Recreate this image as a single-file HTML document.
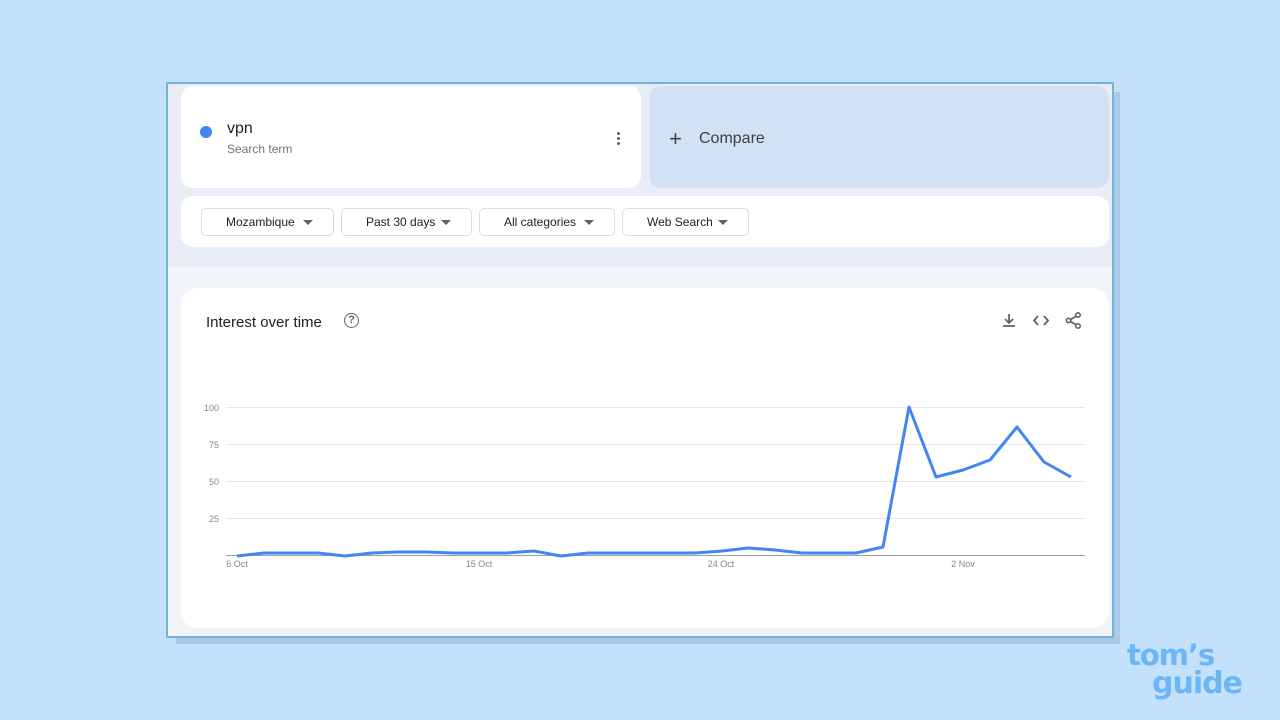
<!DOCTYPE html><html><head><style>
body{margin:0;width:1280px;height:720px;background:#c3e1fb;font-family:"Liberation Sans",Arial,sans-serif;position:relative;overflow:hidden}
.sh{position:absolute;left:176px;top:92px;width:944px;height:552px;background:#a9c9e8}
.fr{position:absolute;left:166px;top:82px;width:944px;height:552px;border:2px solid #72b4d8;background:#f1f4f9;overflow:hidden}
.top{position:absolute;left:0;top:0;width:944px;height:183px;background:#e9eef6}
.card{position:absolute;background:#fff;border-radius:12px}
.chip{position:absolute;top:124px;height:28px;border:1px solid #dadce0;border-radius:5px;font-size:12px;color:#202124;line-height:27px;box-sizing:border-box;padding-left:24px}
.chip:after{content:"";position:absolute;right:20px;top:11px;border:5px solid transparent;border-top:5px solid #5f6368;border-bottom:none}
</style></head><body>
<div class="sh"></div>
<div class="fr">
<div class="top"></div>
<div class="card" style="left:13px;top:2px;width:460px;height:102px">
<div style="position:absolute;left:19px;top:40px;width:12px;height:12px;border-radius:50%;background:#4285f4"></div>
<div style="position:absolute;left:46px;top:34px;font-size:16px;color:#202124">vpn</div>
<div style="position:absolute;left:46px;top:56px;font-size:12px;color:#70757a">Search term</div>
<div style="position:absolute;left:436px;top:46px;width:3px;height:3px;background:#5f6368;border-radius:50%;box-shadow:0 5px 0 #5f6368,0 10px 0 #5f6368"></div>
</div>
<div class="card" style="left:481px;top:2px;width:460px;height:102px;background:#d3e1f4">
<div style="position:absolute;left:20px;top:40px;font-size:22px;color:#444;font-weight:300">+</div>
<div style="position:absolute;left:50px;top:44px;font-size:16px;color:#3c4043">Compare</div>
</div>
<div class="card" style="left:13px;top:112px;width:928px;height:51px"></div>
<div class="chip" style="left:33px;width:133px">Mozambique</div>
<div class="chip" style="left:173px;width:131px">Past 30 days</div>
<div class="chip" style="left:311px;width:136px">All categories</div>
<div class="chip" style="left:454px;width:127px">Web Search</div>
<div class="card" style="left:13px;top:204px;width:928px;height:340px;border-radius:16px">
<div style="position:absolute;left:25px;top:26px;font-size:15px;color:#202124">Interest over time</div>
<div style="position:absolute;left:163px;top:25px;width:13px;height:13px;border:1.5px solid #5f6368;border-radius:50%;font-size:11px;line-height:13px;text-align:center;color:#5f6368;font-weight:bold">?</div>
</div>
<svg style="position:absolute;left:-168px;top:-84px" width="1280" height="720">
<g stroke="#5f6368" stroke-width="1.8" fill="none">
<path d="M1009 314v9M1005 319l4 4 4-4M1003 326h12"/>
<path d="M1038 316l-4 4.5 4 4.5M1044 316l4 4.5-4 4.5"/>
<path d="M1078 315l-9 5.5 9 5.5"/>
</g>
<g fill="#fff" stroke="#5f6368" stroke-width="1.6"><circle cx="1078" cy="315" r="2.2"/><circle cx="1068.5" cy="320.5" r="2.2"/><circle cx="1078" cy="326" r="2.2"/></g>
<g stroke="#e4e6e8" stroke-width="1"><path d="M226 407.5H1085M226 444.5H1085M226 481.5H1085M226 518.5H1085"/></g>
<path d="M226 555.5H1085" stroke="#9aa0a6"/>
<g font-size="9" fill="#80868b" font-family="Liberation Sans"><text x="219" y="411" text-anchor="end">100</text><text x="219" y="448" text-anchor="end">75</text><text x="219" y="485" text-anchor="end">50</text><text x="219" y="522" text-anchor="end">25</text>
<text x="237" y="567" text-anchor="middle">6 Oct</text><text x="479" y="567" text-anchor="middle">15 Oct</text><text x="721" y="567" text-anchor="middle">24 Oct</text><text x="963" y="567" text-anchor="middle">2 Nov</text></g>
<polyline fill="none" stroke="#4285f4" stroke-width="3" stroke-linejoin="round" points="237,556 264,553 291,553 318,553 345,556 372,553 399,552 426,552 453,553 480,553 507,553 534,551 561,556 588,553 615,553 642,553 668,553 695,553 722,551 748,548 775,550 802,553 829,553 856,553 883,547 909,407 936,477 963,470 990,460 1017,427 1044,462 1071,477"/>
</svg>
</div>
<div style="position:absolute;left:1127px;top:640px;font-family:'DejaVu Sans',sans-serif;font-weight:bold;font-size:29px;line-height:30px;color:#6cb6f5;letter-spacing:-1px">tom’s</div>
<div style="position:absolute;left:1152px;top:667px;font-family:'DejaVu Sans',sans-serif;font-weight:bold;font-size:30px;line-height:34px;color:#6cb6f5;letter-spacing:-1px">guide</div>
</body></html>
